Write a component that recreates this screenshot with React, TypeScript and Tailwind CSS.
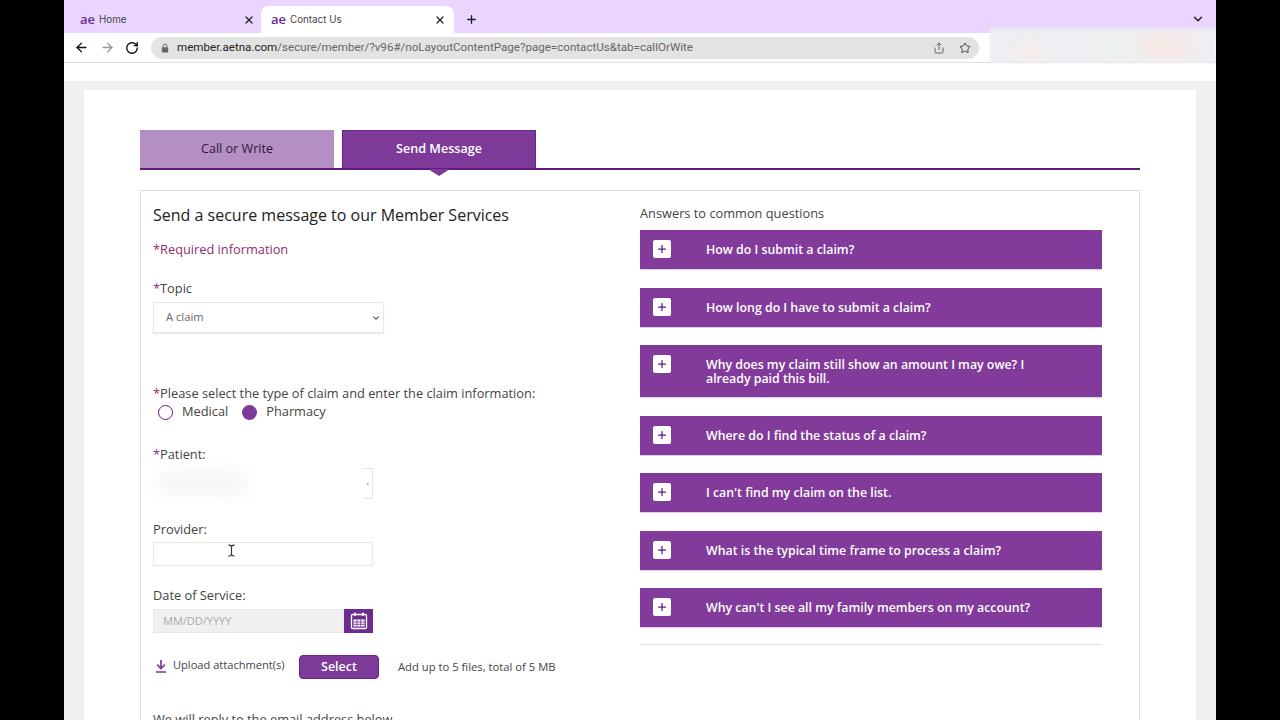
import React from 'react';
import { ArrowLeft, ArrowRight, ChevronDown, Plus, RotateCw, Share, Star, TextCursor, X } from 'lucide-react';

const questions = [
  { text: "How do I submit a claim?", h: 'h-[40px]' },
  { text: "How long do I have to submit a claim?", h: 'h-[40px]' },
  { text: "Why does my claim still show an amount I may owe? I already paid this bill.", h: 'h-[53px]' },
  { text: "Where do I find the status of a claim?", h: 'h-[40px]' },
  { text: "I can't find my claim on the list.", h: 'h-[40px]' },
  { text: "What is the typical time frame to process a claim?", h: 'h-[40px]' },
  { text: "Why can't I see all my family members on my account?", h: 'h-[40px]' },
];

const BrowserTab: React.FC<{ title: string; active?: boolean }> = ({ title, active }) => (
  <div
    className={
      active
        ? 'flex h-[27px] w-[193px] items-center rounded-t-lg bg-white pl-[10px] pr-[8px] text-[#444]'
        : 'flex h-[27px] w-[197px] items-center pl-[16px] pr-[6px] text-[#444]'
    }
  >
    <span className="w-[19px] text-[13px] leading-none font-semibold text-[#6b2c91]">ae</span>
    <span className="mt-[1px] flex-1 text-[9.8px] font-['Inter',sans-serif]">{title}</span>
    <X className="h-[12px] w-[12px] text-[#222]" strokeWidth={2.5} />
  </div>
);

const LockIcon = () => (
  <svg viewBox="0 0 10 12" className="h-[10px] w-[8px]" fill="none">
    <path d="M2.5 5.5V3.5a2.5 2.5 0 0 1 5 0v2" stroke="#666" strokeWidth="1.2" />
    <rect x="1" y="5" width="8" height="6.5" rx="1" fill="#666" />
  </svg>
);

const CalendarIcon = () => (
  <svg viewBox="0 0 20 20" className="h-[20px] w-[20px]" fill="none" stroke="#fff">
    <rect x="2.5" y="3.5" width="15" height="14" rx="1" strokeWidth="1.3" />
    <path d="M6 1.5v3.5M14 1.5v3.5" strokeWidth="1.6" />
    <rect x="4.5" y="8.5" width="11" height="7" fill="#fff" stroke="none" />
    <path d="M4.5 11h11M4.5 13.3h11M8 8.5v7M11.7 8.5v7" stroke="#6e2b8f" strokeWidth=".8" />
  </svg>
);

const UploadIcon = () => (
  <svg viewBox="0 0 14 16" className="h-[14px] w-[12px]" fill="none" stroke="#7d3a98" strokeWidth="2">
    <path d="M7 1v9M2.5 6.5 7 11l4.5-4.5M1 15h12" />
  </svg>
);

export default function App() {
  return (
    <div className="flex h-[720px] w-[1280px] justify-center overflow-hidden bg-black font-['Open_Sans',sans-serif]">
      <div className="relative flex h-[720px] w-[1152px] flex-col overflow-hidden bg-white">
        {/* Browser tabs */}
        <div className="flex h-[33px] shrink-0 items-end bg-[#e9d5fe]">
          <BrowserTab title="Home" />
          <BrowserTab title="Contact Us" active />
          <Plus className="mb-[7px] ml-[11px] h-[13px] w-[13px] text-[#222]" strokeWidth={2.5} />
          <div className="flex-1" />
          <ChevronDown className="mb-[7px] mr-[11px] h-[14px] w-[14px] text-[#222]" strokeWidth={2.5} />
        </div>

        {/* Toolbar */}
        <div className="flex h-[30px] shrink-0 items-center border-b border-[#dedede] bg-white pl-[10px]">
          <ArrowLeft className="h-[15px] w-[15px] text-[#111]" strokeWidth={2.2} />
          <ArrowRight className="ml-[11px] h-[15px] w-[15px] text-[#999]" strokeWidth={2.2} />
          <RotateCw className="ml-[10px] h-[14px] w-[14px] text-[#111]" strokeWidth={2.4} />
          <div className="ml-[12px] flex h-[22px] w-[828px] items-center rounded-full bg-[#e3e3e3] pl-[10px] pr-[8px]">
            <LockIcon />
            <span className="ml-[8px] flex-1 text-[11.6px] whitespace-nowrap text-[#666] font-['Roboto',sans-serif]">
              <span className="text-[#222]">member.aetna.com</span>/secure/member/?v96#/noLayoutContentPage?page=contactUs&amp;tab=callOrWite
            </span>
            <Share className="h-[12px] w-[12px] text-[#666]" />
            <Star className="ml-[14px] h-[12px] w-[12px] text-[#444]" />
          </div>
        </div>

        {/* Blurred extension icons */}
        <div className="absolute left-[926px] top-[28px] h-[35px] w-[226px] overflow-hidden bg-[#f0eef2] blur-[1px]">
          <div className="absolute left-[24px] top-[14px] h-[20px] w-[30px] rounded-full bg-[#f5ecea] blur-[5px]" />
          <div className="absolute left-[110px] top-[8px] h-[20px] w-[40px] rounded-full bg-[#edf1f0] blur-[5px]" />
          <div className="absolute left-[150px] top-[8px] h-[22px] w-[50px] rounded-full bg-[#f5e9e5] blur-[5px]" />
        </div>

        <div className="h-[18px] shrink-0 bg-white" />

        {/* Page */}
        <div className="flex-1 bg-[#f0f0f0] px-[20px] pt-[9px]">
          <div className="h-[640px] bg-white px-[56px] pt-[40px]">
            {/* Tabs */}
            <div className="flex h-[40px] gap-[8px] border-b-2 border-[#5c1a82]">
              <div className="flex h-[38px] w-[194px] items-center justify-center bg-[#b48fc4] text-[12.6px] font-medium text-[#2b1a3a]">
                Call or Write
              </div>
              <div className="relative flex h-[38px] w-[194px] items-center justify-center border border-b-0 border-[#65258a] bg-[#7d3a98] pb-[1px] text-[12.6px] font-semibold text-white">
                Send Message
                <div className="absolute left-[85px] top-[38px] h-0 w-0 border-x-[11px] border-t-[7px] border-x-transparent border-t-[#7d3a98]" />
              </div>
            </div>

            {/* Form panel */}
            <div className="mt-[20px] flex h-[560px] border border-[#dddddd]">
              <div className="w-[499px] pl-[12px] text-[#444]">
                <h1 className="mt-[12px] text-[16px] leading-[24px] text-[#222]">Send a secure message to our Member Services</h1>
                <p className="mt-[13px] text-[12.8px] leading-[18px] text-[#8f2f6f]">*Required information</p>

                <label className="mt-[21px] block text-[12.8px] leading-[18px] text-[#444]">
                  <span className="text-[#8f2f6f]">*</span>Topic
                </label>
                <div className="mt-[5px] flex h-[31px] w-[231px] items-center justify-between border border-[#e8e8e8] pl-[12px] pr-[2px] text-[11.2px] text-[#666] shadow-[0_1px_1px_rgba(0,0,0,0.08)]">
                  A claim
                  <ChevronDown className="h-[10px] w-[10px] text-[#333]" strokeWidth={2.5} />
                </div>

                <p className="mt-[51px] text-[12.8px] leading-[18px] whitespace-nowrap">
                  <span className="text-[#8f2f6f]">*</span>Please select the type of claim and enter the claim information:
                </p>
                <div className="mt-[1px] flex h-[18px] items-center pl-[5px] text-[12.8px]">
                  <span className="h-[15px] w-[15px] rounded-full border-[1.5px] border-[#5c1a82] bg-white" />
                  <span className="ml-[9px]">Medical</span>
                  <span className="ml-[14px] h-[15px] w-[15px] rounded-full bg-[#7d3a98]" />
                  <span className="ml-[9px]">Pharmacy</span>
                </div>

                <label className="mt-[24px] block text-[12.8px] leading-[18px]">
                  <span className="text-[#8f2f6f]">*</span>Patient:
                </label>
                <div className="relative mt-[5px] h-[31px] w-[220px] border border-[#e4e4e4] bg-white">
                  <div className="absolute -left-[8px] -top-[2px] h-[33px] w-[218px] bg-white blur-[1px]" />
                  <div className="absolute left-[4px] top-[3px] h-[22px] w-[90px] rounded-full bg-[#f5f5f5] blur-[8px]" />
                  <span className="absolute right-[3px] top-[6px] text-[9px] leading-[12px] text-[#555]">,</span>
                </div>

                <label className="mt-[21px] block text-[12.8px] leading-[18px]">Provider:</label>
                <div className="relative mt-[4px] h-[24px] w-[220px] border border-[#e8e8e8] bg-white">
                  <TextCursor className="absolute left-[71px] top-[1px] h-[13px] w-[13px] text-[#333]" />
                </div>

                <label className="mt-[20px] block text-[12.8px] leading-[18px]">Date of Service:</label>
                <div className="mt-[5px] flex h-[24px] w-[220px]">
                  <div className="flex flex-1 items-center border border-[#e6e6e6] bg-[#f0f0f0] pl-[9px] text-[11px] text-[#aaa]">
                    MM/DD/YYYY
                  </div>
                  <div className="flex w-[29px] items-center justify-center bg-[#6e2b8f]">
                    <CalendarIcon />
                  </div>
                </div>

                <div className="mt-[22px] flex h-[24px] items-center">
                  <span className="ml-[2px] -mt-[3px]"><UploadIcon /></span>
                  <span className="ml-[6px] -mt-[4px] w-[126px] text-[11.1px]">Upload attachment(s)</span>
                  <button className="h-[24px] w-[80px] rounded-[4px] border border-[#65258a] bg-[#7d3a98] text-[12.5px] font-semibold text-white">Select</button>
                  <span className="ml-[19px] text-[11.25px]">Add up to 5 files, total of 5 MB</span>
                </div>

                <p className="mt-[31px] text-[12.8px] leading-[18px] whitespace-nowrap">We will reply to the email address below</p>
              </div>

              {/* Answers */}
              <div className="w-[462px] pt-[13px]">
                <p className="text-[12.8px] leading-[18px] text-[#444]">Answers to common questions</p>
                <div className="mt-[8px] flex flex-col gap-[17.5px]">
                  {questions.map((q) => (
                    <div key={q.text} className={`flex ${q.h} border-b border-[#e3cdea] bg-[#823b9b] pl-[13px] pr-[60px] pt-[10px] text-white`}>
                      <span className="flex h-[18px] w-[18px] shrink-0 items-center justify-center rounded-[2px] bg-white">
                        <Plus className="h-[12px] w-[12px] text-[#5c1a82]" strokeWidth={2.5} />
                      </span>
                      <span className="ml-[35px] pt-[3px] text-[12.35px] leading-[13.5px] font-semibold">{q.text}</span>
                    </div>
                  ))}
                </div>
                <div className="mt-[16px] border-t border-[#dddddd]" />
              </div>
            </div>
          </div>
        </div>
      </div>
    </div>
  );
}
